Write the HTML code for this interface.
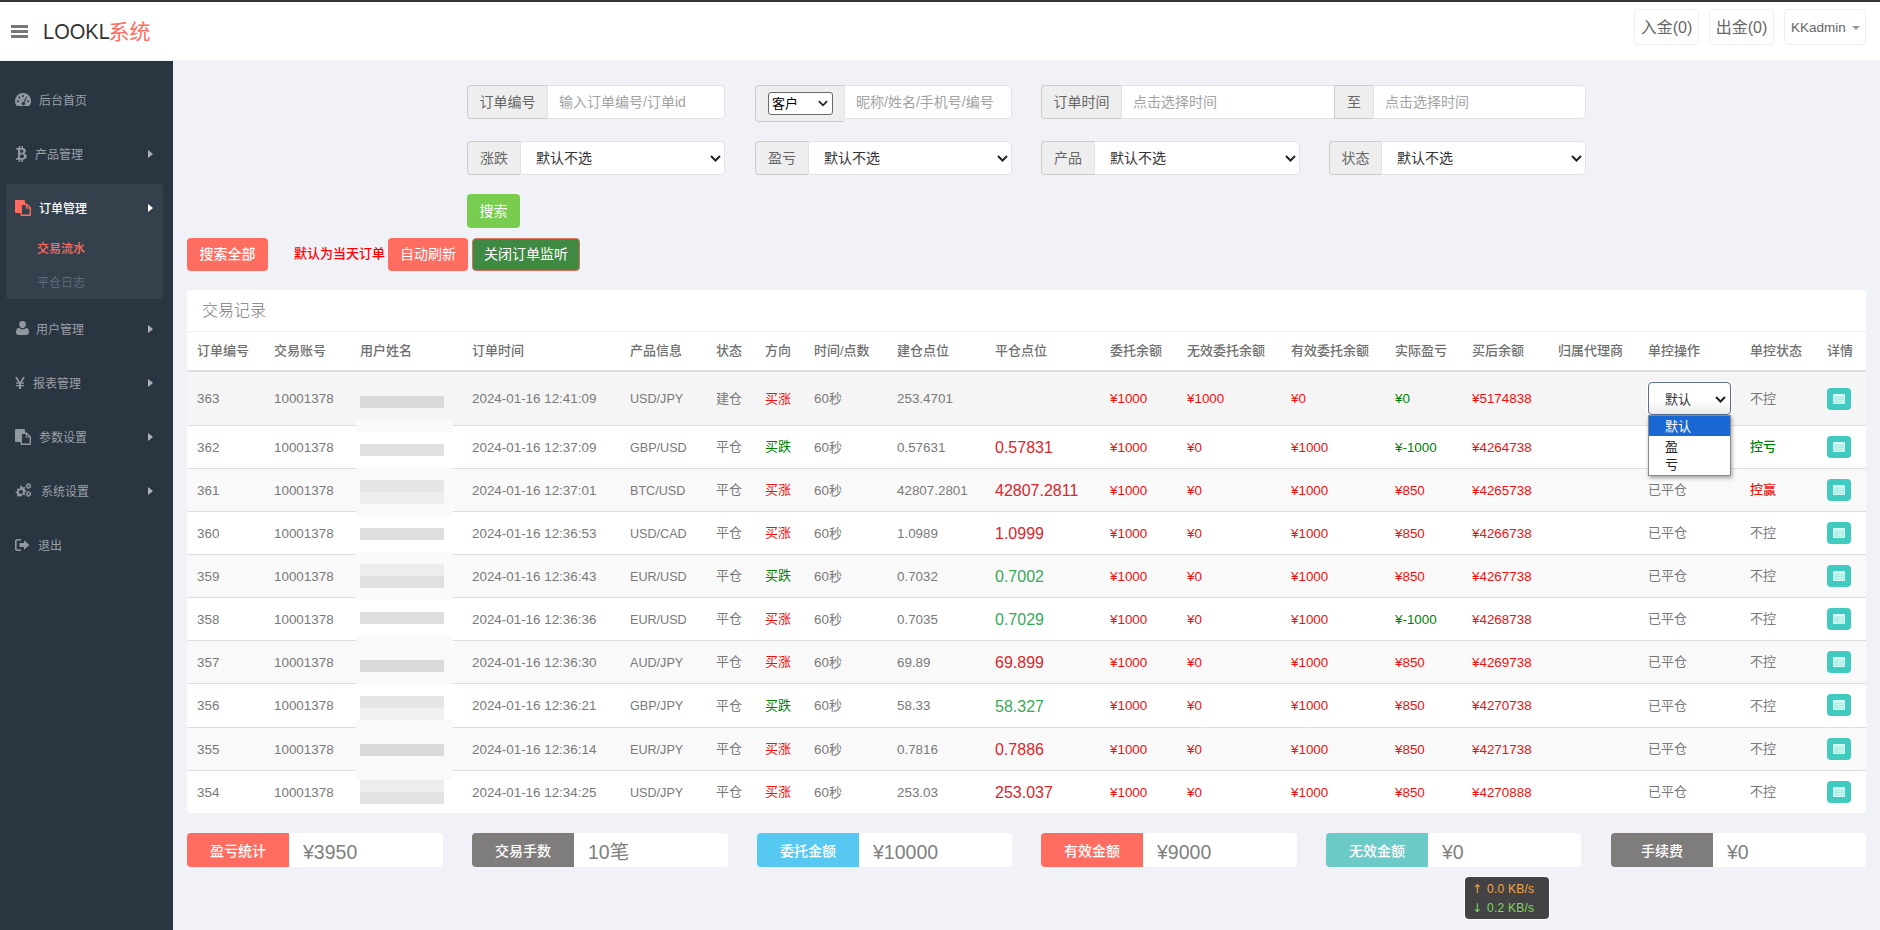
<!DOCTYPE html>
<html lang="zh-CN"><head><meta charset="utf-8"><title>LOOKL系统</title>
<style>
*{box-sizing:border-box;margin:0;padding:0}
html,body{width:1880px;height:930px;overflow:hidden}
body{position:relative;background:#f1f2f7;font-family:"Liberation Sans", "Noto Sans CJK SC", sans-serif;font-size:13px;color:#797979;line-height:1.42857}
.abs{position:absolute}
#topbar{left:0;top:0;width:1880px;height:2px;background:#333}
#header{left:0;top:2px;width:1880px;height:58px;background:#fff}
#sidebar{left:0;top:61px;width:173px;height:869px;background:#2a3542}
#burger{left:11px;top:25px;width:17px;height:13px}
#burger i{display:block;height:3px;background:#777;margin-bottom:2px}
#logo{left:43px;top:16px;font-size:22px;line-height:32px;color:#333;white-space:nowrap;transform:scaleX(.91);transform-origin:0 0}
#logo2{left:108.600px;top:16px;font-size:21px;line-height:32px;color:#ff6c60;white-space:nowrap}
.tbtn{top:9px;height:36px;border:1px solid #eee;border-radius:4px;background:#fff;color:#666;font-size:16px;line-height:36px;text-align:center;white-space:nowrap}
.mi{left:0;width:173px;height:34px;line-height:34px;font-size:12px;color:#9ba0a7;white-space:nowrap}
.mi svg{position:absolute}
.mi .t{position:absolute;top:1px}
.mi .ar{position:absolute;left:148px;top:13px;width:0;height:0;border-left:5px solid #aeb2b7;border-top:4px solid transparent;border-bottom:4px solid transparent}
#actbg{left:6px;top:184px;width:157px;height:115px;background:#35404d;border-radius:4px}
.sub{left:37px;font-size:12px;line-height:20px;white-space:nowrap;margin-top:1px}
.ig{top:85px;height:34px;display:flex;font-size:14px}
.ig .ad{background:#eee;border:1px solid #ccc;border-right:0;border-radius:4px 0 0 4px;color:#666;text-align:center;line-height:32px;white-space:nowrap;flex:none}
.ig .in{background:#fff;border:1px solid #e2e2e4;border-radius:0 4px 4px 0;flex:1;line-height:32px;padding-left:11px;color:#a3a3a3;white-space:nowrap;overflow:hidden;position:relative}
.ig .in.mid{border-radius:0}
.ig .in.sel{color:#333;padding-left:15px}
.chev{position:absolute;right:3px;top:13px;width:11px;height:7px}
.btn{height:33px;border-radius:4px;color:#fff;font-size:14px;line-height:33px;text-align:center;white-space:nowrap}
#panel{left:187px;top:290px;width:1679px;height:523px;background:#fff;border-radius:4px}
#ptitle{left:15px;top:9px;font-size:16px;line-height:24px;color:#797979;font-weight:300}
table{position:absolute;left:0;top:41px;width:1679px;border-collapse:separate;border-spacing:0;table-layout:fixed}
th,td{padding:0 10px;text-align:left;vertical-align:middle;white-space:nowrap;overflow:visible;font-size:13px}
th{font-weight:500;color:#6f6f6f;height:41px;border-top:1px solid #eee;border-bottom:2px solid #ddd}
td{border-bottom:1px solid #ddd;height:43px;padding-top:1px}
td.n{font-size:13.400px}
td.p{font-size:12.600px;padding-top:3px}
td.big{padding-top:3px}
tr.r1 td{height:54px}
tr.h44 td{height:44px}
tr.last td{height:42px;border-bottom:0}
tr.odd td{background:#f9f9f9}
tr.r1 td{background:#f5f5f5}
.red{color:#f01010}.green{color:#008000}
.big{font-size:16px}
.bred{color:#d9262c}.bgreen{color:#3aa85a}
.blur{display:block;width:84px;height:13px;background:#dcdcdc;position:relative;top:3px}
.dbtn{display:block;width:24px;height:22px;border-radius:4px;background:#41cac0;position:relative;top:-1px}
tr.r1 .dbtn{top:0}
.dbtn svg{position:absolute;left:6px;top:6px}
.st{top:833px;height:34px;width:256px;display:flex}
.st .l{width:102px;flex:none;border-radius:4px 0 0 4px;color:#fff;font-size:14px;line-height:36px;text-align:center;font-weight:500}
.st .v{flex:1;background:#fff;border-radius:0 4px 4px 0;font-size:19.500px;line-height:34px;padding:2px 0 0 14px;color:#808080}
#net{left:1465px;top:877px;width:84px;height:42px;background:#434345;border-radius:4px;font-size:12px;line-height:19px;padding:3px 0 0 22px;white-space:nowrap;letter-spacing:.25px;box-shadow:0 0 0 1px rgba(255,255,255,.8)}
#net .ar2{position:absolute;left:7px;font-family:"DejaVu Sans",sans-serif;font-size:12px;line-height:19px;letter-spacing:0}
#sel1{left:1461px;top:92px;width:83px;height:33px;border:1px solid #5b6f88;border-radius:4px;background:linear-gradient(#fff,#fff 55%,#ececec);box-shadow:0 0 0 1px #fff}
#dd{left:1461px;top:125px;width:83px;height:61px;background:#fff;border:1px solid #8a8a8a;box-shadow:1px 2px 4px rgba(0,0,0,.35);font-size:13px;color:#222}
</style></head><body>
<div class="abs" id="header"></div><div class="abs" id="topbar"></div>
<div class="abs" id="burger"><i></i><i></i><i></i></div>
<div class="abs" id="logo">LOOKL</div><div class="abs" id="logo2">系统</div>
<div class="abs tbtn" style="left:1634px;width:65px">入金(0)</div>
<div class="abs tbtn" style="left:1709px;width:65px">出金(0)</div>
<div class="abs tbtn" style="left:1784px;width:82px;font-size:13.500px;text-align:left;padding-left:6px">KKadmin<i class="abs" style="left:67px;top:16px;border-top:4px solid #999;border-left:4px solid transparent;border-right:4px solid transparent"></i></div>
<div class="abs" id="sidebar"></div><div class="abs" id="actbg"></div>
<div class="abs mi" style="top:83px"><svg style="left:15px;top:10px" width="16" height="13" viewBox="0 0 16 13"><path fill="#92989f" d="M8 0a8 8 0 0 0-8 8c0 1.7.5 3.2 1.4 4.5.2.3.5.5.9.5h11.4c.4 0 .7-.2.9-.5A8 8 0 0 0 8 0z"/><g fill="#2a3542"><circle cx="3" cy="8.2" r="1"/><circle cx="4.4" cy="4.6" r="1"/><circle cx="8" cy="3" r="1"/><circle cx="13" cy="8.2" r="1"/><path d="M11.2 3.6l.9.5-2.6 5.2a1.7 1.7 0 1 1-1-.4z"/></g></svg><span class="t" style="left:39px;">后台首页</span></div>
<div class="abs mi" style="top:137px"><svg style="left:16px;top:9px" width="11" height="16" viewBox="0 0 11 16"><path fill="#92989f" d="M2.7 0h1.5v2h1.2V0h1.5v2.1C8.7 2.400 9.900 3.300 9.900 5c0 1.200-.6 2-1.500 2.400 1.400.4 2.300 1.300 2.300 2.900 0 2.200-1.600 3.200-3.800 3.400V16H5.400v-2.200H4.200V16H2.700v-2.200H0l.3-1.700h1c.4 0 .6-.2.6-.6V4.300c0-.4-.3-.7-.7-.7H.1V2h2.600zM4.200 3.800v2.900h1.300c1 0 1.800-.4 1.800-1.500 0-1-.8-1.400-1.800-1.400zm0 4.600V12h1.600c1.200 0 2.200-.4 2.200-1.800 0-1.300-1-1.800-2.200-1.800z"/></svg><span class="t" style="left:35px;">产品管理</span><i class="ar"></i></div>
<div class="abs mi" style="top:191px"><svg style="left:15px;top:9px" width="16" height="16" viewBox="0 0 16 16"><path fill="#ff6c60" d="M1 0h8a1 1 0 0 1 1 1v11a1 1 0 0 1-1 1H1a1 1 0 0 1-1-1V1a1 1 0 0 1 1-1z"/><path fill="#35404d" stroke="#ff6c60" stroke-width="1.400" d="M6.700 4.200h4.800l3.800 3.500v7a.5.500 0 0 1-.5.500H6.700a.5.500 0 0 1-.5-.5V4.700a.5.500 0 0 1 .5-.5z"/><path fill="none" stroke="#ff6c60" stroke-width="1.200" d="M11.300 4.200V8h4"/></svg><span class="t" style="left:39px;color:#fff;font-weight:500">订单管理</span><i class="ar" style="border-left-color:#fff"></i></div>
<div class="abs sub" style="top:238px;color:#ff6c60;font-weight:500">交易流水</div>
<div class="abs sub" style="top:272px;color:#5d6a78">平仓日志</div>
<div class="abs mi" style="top:312px"><svg style="left:16px;top:9px" width="13" height="14" viewBox="0 0 13 14"><path fill="#92989f" d="M6.500 0a3.300 3.300 0 0 1 3.300 3.500c0 2-1.500 3.700-3.300 3.700S3.200 5.500 3.200 3.500A3.300 3.300 0 0 1 6.500 0zM3 6.800c.9 1 2.100 1.600 3.500 1.600S9.100 7.800 10 6.800c2 .3 3 1.800 3 4.400 0 1.700-1 2.800-2.500 2.800h-8C1 14 0 12.900 0 11.200c0-2.600 1-4.100 3-4.400z"/></svg><span class="t" style="left:36px;">用户管理</span><i class="ar"></i></div>
<div class="abs mi" style="top:366px"><svg style="left:15px;top:11px" width="10" height="12" viewBox="0 0 11 13"><path fill="#92989f" d="M0 0h2.300l3.200 5.600L8.700 0H11L7.400 6h2.400v1.400H6.600v1.200h3.200V10H6.600v3H4.400v-3H1.200V8.600h3.200V7.400H1.200V6h2.400z"/></svg><span class="t" style="left:33px;">报表管理</span><i class="ar"></i></div>
<div class="abs mi" style="top:420px"><svg style="left:15px;top:9px" width="16" height="16" viewBox="0 0 16 16"><path fill="#92989f" d="M1 0h8a1 1 0 0 1 1 1v11a1 1 0 0 1-1 1H1a1 1 0 0 1-1-1V1a1 1 0 0 1 1-1z"/><path fill="#2a3542" stroke="#92989f" stroke-width="1.400" d="M6.700 4.200h4.800l3.800 3.500v7a.5.500 0 0 1-.5.500H6.700a.5.500 0 0 1-.5-.5V4.700a.5.500 0 0 1 .5-.5z"/><path fill="none" stroke="#92989f" stroke-width="1.200" d="M11.300 4.200V8h4"/></svg><span class="t" style="left:39px;">参数设置</span><i class="ar"></i></div>
<div class="abs mi" style="top:474px"><svg style="left:15px;top:9px" width="17" height="15" viewBox="0 0 17 15"><g fill="#92989f"><path d="M5.500 2.500l1.300.1.300 1.300 1 .5 1.200-.7 1 1-.8 1.200.5 1 1.300.3v1.500l-1.300.3-.5 1 .8 1.200-1 1-1.200-.7-1 .5-.3 1.300H5.300L5 13.500l-1-.5-1.200.7-1-1 .7-1.200-.5-1L.700 10.200V8.700L2 8.400l.5-1-.7-1.200 1-1L4 5.900l1-.5.3-1.300zM6 7a2 2 0 1 0 0 4.100A2 2 0 0 0 6 7z"/><path d="M13.500 0l.8.200v1l.7.400.9-.4.500.8-.7.600v.8l.7.600-.5.800-.9-.4-.7.400v1l-.8.100-.9-.100v-1l-.7-.4-.8.400-.5-.8.700-.6v-.8l-.7-.6.500-.8.800.4.700-.4v-1zM13.500 2a1 1 0 1 0 0 2 1 1 0 0 0 0-2z"/><path d="M13.500 8l.8.200v1l.7.400.9-.4.500.8-.7.600v.8l.7.600-.5.800-.9-.4-.7.400v1l-.8.100-.9-.100v-1l-.7-.4-.8.400-.5-.8.700-.6v-.8l-.7-.6.500-.8.800.4.700-.4v-1zM13.500 10a1 1 0 1 0 0 2 1 1 0 0 0 0-2z"/></g></svg><span class="t" style="left:41px;">系统设置</span><i class="ar"></i></div>
<div class="abs mi" style="top:528px"><svg style="left:15px;top:11px" width="15" height="12" viewBox="0 0 15 12"><path fill="#92989f" d="M2.500 0H6v1.600H2.800c-.7 0-1.200.5-1.200 1.200v6.400c0 .7.500 1.200 1.200 1.200H6V12H2.500A2.500 2.500 0 0 1 0 9.500v-7A2.500 2.500 0 0 1 2.500 0zM9 1.200L14.500 6 9 10.800V8H4.500V4H9z"/></svg><span class="t" style="left:38px;">退出</span></div>
<div class="abs ig" style="left:467px;width:258px"><div class="ad" style="width:80px">订单编号</div><div class="in">输入订单编号/订单id</div></div>
<div class="abs ig" style="left:755px;width:257px"><div class="ad" style="width:89px;height:37px;position:relative"><span class="abs" style="left:12px;top:6px;width:65px;height:23px;border:1px solid #6a6a6a;border-radius:3px;background:#fff;color:#000;font-size:13px;line-height:22px;text-align:left;padding-left:3px">客户<svg class="chev" style="top:7px;right:4px;width:10px" viewBox="0 0 11 7"><path d="M1 1l4.500 4.500L10 1" fill="none" stroke="#222" stroke-width="2"/></svg></span></div><div class="in">昵称/姓名/手机号/编号</div></div>
<div class="abs ig" style="left:1041px;width:545px"><div class="ad" style="width:80px">订单时间</div><div class="in mid" style="flex:none;width:214px">点击选择时间</div><div class="ad" style="width:40px;border-radius:0;border-right:1px solid #ccc;margin-left:-1px;position:relative">至</div><div class="in" style="margin-left:-1px">点击选择时间</div></div>
<div class="abs ig" style="left:467px;top:141px;width:258px"><div class="ad" style="width:53px">涨跌</div><div class="in sel">默认不选<svg class="chev" viewBox="0 0 11 7"><path d="M1 1l4.500 4.500L10 1" fill="none" stroke="#222" stroke-width="2"/></svg></div></div>
<div class="abs ig" style="left:755px;top:141px;width:257px"><div class="ad" style="width:53px">盈亏</div><div class="in sel">默认不选<svg class="chev" viewBox="0 0 11 7"><path d="M1 1l4.500 4.500L10 1" fill="none" stroke="#222" stroke-width="2"/></svg></div></div>
<div class="abs ig" style="left:1041px;top:141px;width:259px"><div class="ad" style="width:53px">产品</div><div class="in sel">默认不选<svg class="chev" viewBox="0 0 11 7"><path d="M1 1l4.500 4.500L10 1" fill="none" stroke="#222" stroke-width="2"/></svg></div></div>
<div class="abs ig" style="left:1329px;top:141px;width:257px"><div class="ad" style="width:52px">状态</div><div class="in sel">默认不选<svg class="chev" viewBox="0 0 11 7"><path d="M1 1l4.500 4.500L10 1" fill="none" stroke="#222" stroke-width="2"/></svg></div></div>
<div class="abs btn" style="left:467px;top:194px;width:53px;height:34px;line-height:34px;background:#78cd51">搜索</div>
<div class="abs btn" style="left:187px;top:238px;width:81px;background:#ff6c60;font-weight:500">搜索全部</div>
<div class="abs" style="left:294px;top:244px;font-size:13px;line-height:20px;color:#f00;font-weight:500;white-space:nowrap">默认为当天订单</div>
<div class="abs btn" style="left:388px;top:238px;width:80px;background:#ff6c60">自动刷新</div>
<div class="abs btn" style="left:472px;top:238px;width:108px;background:#3f8a43;border:1px solid #e2705e;line-height:31px">关闭订单监听</div>
<div class="abs" id="panel"><div class="abs" id="ptitle">交易记录</div><table><colgroup>
<col style="width:77px">
<col style="width:86px">
<col style="width:112px">
<col style="width:158px">
<col style="width:86px">
<col style="width:49px">
<col style="width:49px">
<col style="width:83px">
<col style="width:98px">
<col style="width:115px">
<col style="width:77px">
<col style="width:104px">
<col style="width:104px">
<col style="width:77px">
<col style="width:86px">
<col style="width:90px">
<col style="width:102px">
<col style="width:77px">
<col style="width:49px">
</colgroup><thead><tr>
<th>订单编号</th>
<th>交易账号</th>
<th>用户姓名</th>
<th>订单时间</th>
<th>产品信息</th>
<th>状态</th>
<th>方向</th>
<th>时间/点数</th>
<th>建仓点位</th>
<th>平仓点位</th>
<th>委托余额</th>
<th>无效委托余额</th>
<th>有效委托余额</th>
<th>实际盈亏</th>
<th>买后余额</th>
<th>归属代理商</th>
<th>单控操作</th>
<th>单控状态</th>
<th>详情</th>
</tr></thead><tbody>
<tr class="r1">
<td class="n">363</td><td class="n">10001378</td><td></td>
<td class="n">2024-01-16 12:41:09</td><td class="p">USD/JPY</td><td>建仓</td>
<td class="red">买涨</td><td><span style="font-size:13.400px">60</span>秒</td><td class="n">253.4701</td>
<td></td>
<td class="n red">¥1000</td><td class="n red">¥1000</td><td class="n red">¥0</td>
<td class="n green">¥0</td><td class="n red">¥5174838</td><td></td>
<td></td>
<td>不控</td>
<td><span class="dbtn"><svg width="12" height="10" viewBox="0 0 12 10"><rect width="12" height="10" rx="1" fill="#d3fbf5"/><rect x="1.200" y="2.600" width="9.600" height="6.200" fill="#a9e9e0"/><path fill="#d3fbf5" d="M2 3.800h1.200v1H2zm2.200 0H10v1H4.200zM2 6.200h1.200v1.200H2zm2.200 0H10v1.200H4.200z"/></svg></span></td></tr>
<tr class="">
<td class="n">362</td><td class="n">10001378</td><td></td>
<td class="n">2024-01-16 12:37:09</td><td class="p">GBP/USD</td><td>平仓</td>
<td class="green">买跌</td><td><span style="font-size:13.400px">60</span>秒</td><td class="n">0.57631</td>
<td class="big bred">0.57831</td>
<td class="n red">¥1000</td><td class="n red">¥0</td><td class="n red">¥1000</td>
<td class="n green">¥-1000</td><td class="n red">¥4264738</td><td></td>
<td></td>
<td class="green" style="font-weight:500">控亏</td>
<td><span class="dbtn"><svg width="12" height="10" viewBox="0 0 12 10"><rect width="12" height="10" rx="1" fill="#d3fbf5"/><rect x="1.200" y="2.600" width="9.600" height="6.200" fill="#a9e9e0"/><path fill="#d3fbf5" d="M2 3.800h1.200v1H2zm2.200 0H10v1H4.200zM2 6.200h1.200v1.200H2zm2.200 0H10v1.200H4.200z"/></svg></span></td></tr>
<tr class="odd">
<td class="n">361</td><td class="n">10001378</td><td></td>
<td class="n">2024-01-16 12:37:01</td><td class="p">BTC/USD</td><td>平仓</td>
<td class="red">买涨</td><td><span style="font-size:13.400px">60</span>秒</td><td class="n">42807.2801</td>
<td class="big bred">42807.2811</td>
<td class="n red">¥1000</td><td class="n red">¥0</td><td class="n red">¥1000</td>
<td class="n red">¥850</td><td class="n red">¥4265738</td><td></td>
<td>已平仓</td>
<td class="red" style="font-weight:500">控赢</td>
<td><span class="dbtn"><svg width="12" height="10" viewBox="0 0 12 10"><rect width="12" height="10" rx="1" fill="#d3fbf5"/><rect x="1.200" y="2.600" width="9.600" height="6.200" fill="#a9e9e0"/><path fill="#d3fbf5" d="M2 3.800h1.200v1H2zm2.200 0H10v1H4.200zM2 6.200h1.200v1.200H2zm2.200 0H10v1.200H4.200z"/></svg></span></td></tr>
<tr class="">
<td class="n">360</td><td class="n">10001378</td><td></td>
<td class="n">2024-01-16 12:36:53</td><td class="p">USD/CAD</td><td>平仓</td>
<td class="red">买涨</td><td><span style="font-size:13.400px">60</span>秒</td><td class="n">1.0989</td>
<td class="big bred">1.0999</td>
<td class="n red">¥1000</td><td class="n red">¥0</td><td class="n red">¥1000</td>
<td class="n red">¥850</td><td class="n red">¥4266738</td><td></td>
<td>已平仓</td>
<td>不控</td>
<td><span class="dbtn"><svg width="12" height="10" viewBox="0 0 12 10"><rect width="12" height="10" rx="1" fill="#d3fbf5"/><rect x="1.200" y="2.600" width="9.600" height="6.200" fill="#a9e9e0"/><path fill="#d3fbf5" d="M2 3.800h1.200v1H2zm2.200 0H10v1H4.200zM2 6.200h1.200v1.200H2zm2.200 0H10v1.200H4.200z"/></svg></span></td></tr>
<tr class="odd">
<td class="n">359</td><td class="n">10001378</td><td></td>
<td class="n">2024-01-16 12:36:43</td><td class="p">EUR/USD</td><td>平仓</td>
<td class="green">买跌</td><td><span style="font-size:13.400px">60</span>秒</td><td class="n">0.7032</td>
<td class="big bgreen">0.7002</td>
<td class="n red">¥1000</td><td class="n red">¥0</td><td class="n red">¥1000</td>
<td class="n red">¥850</td><td class="n red">¥4267738</td><td></td>
<td>已平仓</td>
<td>不控</td>
<td><span class="dbtn"><svg width="12" height="10" viewBox="0 0 12 10"><rect width="12" height="10" rx="1" fill="#d3fbf5"/><rect x="1.200" y="2.600" width="9.600" height="6.200" fill="#a9e9e0"/><path fill="#d3fbf5" d="M2 3.800h1.200v1H2zm2.200 0H10v1H4.200zM2 6.200h1.200v1.200H2zm2.200 0H10v1.200H4.200z"/></svg></span></td></tr>
<tr class="">
<td class="n">358</td><td class="n">10001378</td><td></td>
<td class="n">2024-01-16 12:36:36</td><td class="p">EUR/USD</td><td>平仓</td>
<td class="red">买涨</td><td><span style="font-size:13.400px">60</span>秒</td><td class="n">0.7035</td>
<td class="big bgreen">0.7029</td>
<td class="n red">¥1000</td><td class="n red">¥0</td><td class="n red">¥1000</td>
<td class="n green">¥-1000</td><td class="n red">¥4268738</td><td></td>
<td>已平仓</td>
<td>不控</td>
<td><span class="dbtn"><svg width="12" height="10" viewBox="0 0 12 10"><rect width="12" height="10" rx="1" fill="#d3fbf5"/><rect x="1.200" y="2.600" width="9.600" height="6.200" fill="#a9e9e0"/><path fill="#d3fbf5" d="M2 3.800h1.200v1H2zm2.200 0H10v1H4.200zM2 6.200h1.200v1.200H2zm2.200 0H10v1.200H4.200z"/></svg></span></td></tr>
<tr class="odd">
<td class="n">357</td><td class="n">10001378</td><td></td>
<td class="n">2024-01-16 12:36:30</td><td class="p">AUD/JPY</td><td>平仓</td>
<td class="red">买涨</td><td><span style="font-size:13.400px">60</span>秒</td><td class="n">69.89</td>
<td class="big bred">69.899</td>
<td class="n red">¥1000</td><td class="n red">¥0</td><td class="n red">¥1000</td>
<td class="n red">¥850</td><td class="n red">¥4269738</td><td></td>
<td>已平仓</td>
<td>不控</td>
<td><span class="dbtn"><svg width="12" height="10" viewBox="0 0 12 10"><rect width="12" height="10" rx="1" fill="#d3fbf5"/><rect x="1.200" y="2.600" width="9.600" height="6.200" fill="#a9e9e0"/><path fill="#d3fbf5" d="M2 3.800h1.200v1H2zm2.200 0H10v1H4.200zM2 6.200h1.200v1.200H2zm2.200 0H10v1.200H4.200z"/></svg></span></td></tr>
<tr class="h44">
<td class="n">356</td><td class="n">10001378</td><td></td>
<td class="n">2024-01-16 12:36:21</td><td class="p">GBP/JPY</td><td>平仓</td>
<td class="green">买跌</td><td><span style="font-size:13.400px">60</span>秒</td><td class="n">58.33</td>
<td class="big bgreen">58.327</td>
<td class="n red">¥1000</td><td class="n red">¥0</td><td class="n red">¥1000</td>
<td class="n red">¥850</td><td class="n red">¥4270738</td><td></td>
<td>已平仓</td>
<td>不控</td>
<td><span class="dbtn"><svg width="12" height="10" viewBox="0 0 12 10"><rect width="12" height="10" rx="1" fill="#d3fbf5"/><rect x="1.200" y="2.600" width="9.600" height="6.200" fill="#a9e9e0"/><path fill="#d3fbf5" d="M2 3.800h1.200v1H2zm2.200 0H10v1H4.200zM2 6.200h1.200v1.200H2zm2.200 0H10v1.200H4.200z"/></svg></span></td></tr>
<tr class="odd">
<td class="n">355</td><td class="n">10001378</td><td></td>
<td class="n">2024-01-16 12:36:14</td><td class="p">EUR/JPY</td><td>平仓</td>
<td class="red">买涨</td><td><span style="font-size:13.400px">60</span>秒</td><td class="n">0.7816</td>
<td class="big bred">0.7886</td>
<td class="n red">¥1000</td><td class="n red">¥0</td><td class="n red">¥1000</td>
<td class="n red">¥850</td><td class="n red">¥4271738</td><td></td>
<td>已平仓</td>
<td>不控</td>
<td><span class="dbtn"><svg width="12" height="10" viewBox="0 0 12 10"><rect width="12" height="10" rx="1" fill="#d3fbf5"/><rect x="1.200" y="2.600" width="9.600" height="6.200" fill="#a9e9e0"/><path fill="#d3fbf5" d="M2 3.800h1.200v1H2zm2.200 0H10v1H4.200zM2 6.200h1.200v1.200H2zm2.200 0H10v1.200H4.200z"/></svg></span></td></tr>
<tr class="last">
<td class="n">354</td><td class="n">10001378</td><td></td>
<td class="n">2024-01-16 12:34:25</td><td class="p">USD/JPY</td><td>平仓</td>
<td class="red">买涨</td><td><span style="font-size:13.400px">60</span>秒</td><td class="n">253.03</td>
<td class="big bred">253.037</td>
<td class="n red">¥1000</td><td class="n red">¥0</td><td class="n red">¥1000</td>
<td class="n red">¥850</td><td class="n red">¥4270888</td><td></td>
<td>已平仓</td>
<td>不控</td>
<td><span class="dbtn"><svg width="12" height="10" viewBox="0 0 12 10"><rect width="12" height="10" rx="1" fill="#d3fbf5"/><rect x="1.200" y="2.600" width="9.600" height="6.200" fill="#a9e9e0"/><path fill="#d3fbf5" d="M2 3.800h1.200v1H2zm2.200 0H10v1H4.200zM2 6.200h1.200v1.200H2zm2.200 0H10v1.200H4.200z"/></svg></span></td></tr>
</tbody></table>
<i class="abs" style="left:169px;top:130px;width:97px;height:12px;background:#fafafa"></i>
<i class="abs" style="left:169px;top:178px;width:97px;height:12px;background:#fafafa"></i>
<i class="abs" style="left:169px;top:214px;width:97px;height:12px;background:#fafafa"></i>
<i class="abs" style="left:169px;top:262px;width:97px;height:12px;background:#fafafa"></i>
<i class="abs" style="left:169px;top:298px;width:97px;height:12px;background:#fafafa"></i>
<i class="abs" style="left:169px;top:346px;width:97px;height:12px;background:#fafafa"></i>
<i class="abs" style="left:169px;top:382px;width:97px;height:12px;background:#fafafa"></i>
<i class="abs" style="left:169px;top:430px;width:97px;height:12px;background:#fafafa"></i>
<i class="abs" style="left:169px;top:478px;width:97px;height:12px;background:#fafafa"></i>
<i class="abs" style="left:173px;top:106px;width:84px;height:12px;background:#d9d9d9"></i>
<i class="abs" style="left:173px;top:154px;width:84px;height:12px;background:#e0e0e0"></i>
<i class="abs" style="left:173px;top:190px;width:84px;height:12px;background:#e6e6e6"></i>
<i class="abs" style="left:173px;top:202px;width:84px;height:12px;background:#eeeeee"></i>
<i class="abs" style="left:173px;top:238px;width:84px;height:12px;background:#dedede"></i>
<i class="abs" style="left:173px;top:274px;width:84px;height:12px;background:#ededed"></i>
<i class="abs" style="left:173px;top:286px;width:84px;height:12px;background:#e0e0e0"></i>
<i class="abs" style="left:173px;top:322px;width:84px;height:12px;background:#dedede"></i>
<i class="abs" style="left:173px;top:370px;width:84px;height:12px;background:#dadada"></i>
<i class="abs" style="left:173px;top:406px;width:84px;height:12px;background:#e6e6e6"></i>
<i class="abs" style="left:173px;top:418px;width:84px;height:12px;background:#f1f1f1"></i>
<i class="abs" style="left:173px;top:454px;width:84px;height:12px;background:#dadada"></i>
<i class="abs" style="left:173px;top:490px;width:84px;height:12px;background:#ededed"></i>
<i class="abs" style="left:173px;top:502px;width:84px;height:12px;background:#e3e3e3"></i>
<div class="abs" id="sel1"><span class="abs" style="left:16px;top:7px;font-size:13px;line-height:20px;color:#333">默认</span><svg class="chev" style="right:4px;top:13px" viewBox="0 0 11 7"><path d="M1 1l4.500 4.500L10 1" fill="none" stroke="#222" stroke-width="2"/></svg></div>
<div class="abs" id="dd"><div style="height:20px;line-height:21px;background:#1967d2;color:#fff;padding-left:16px">默认</div><div style="height:19px;line-height:21px;padding-left:16px">盈</div><div style="height:19px;line-height:20px;padding-left:16px">亏</div></div>
</div>
<div class="abs st" style="left:187px;width:256px"><div class="l" style="background:#ff6c60">盈亏统计</div><div class="v">¥3950</div></div>
<div class="abs st" style="left:472px;width:256px"><div class="l" style="background:#7f7d7c">交易手数</div><div class="v">10笔</div></div>
<div class="abs st" style="left:757px;width:255px"><div class="l" style="background:#57c8f2">委托金额</div><div class="v">¥10000</div></div>
<div class="abs st" style="left:1041px;width:256px"><div class="l" style="background:#ff6c60">有效金额</div><div class="v">¥9000</div></div>
<div class="abs st" style="left:1326px;width:255px"><div class="l" style="background:#6ccac9">无效金额</div><div class="v">¥0</div></div>
<div class="abs st" style="left:1611px;width:255px"><div class="l" style="background:#7f7d7c">手续费</div><div class="v">¥0</div></div>
<div class="abs" id="net"><span class="ar2" style="top:3px;color:#f5a742">↑</span><span class="ar2" style="top:22px;color:#7ed957">↓</span><div style="color:#f5a742">0.0 KB/s</div><div style="color:#7ed957">0.2 KB/s</div></div>
</body></html>
